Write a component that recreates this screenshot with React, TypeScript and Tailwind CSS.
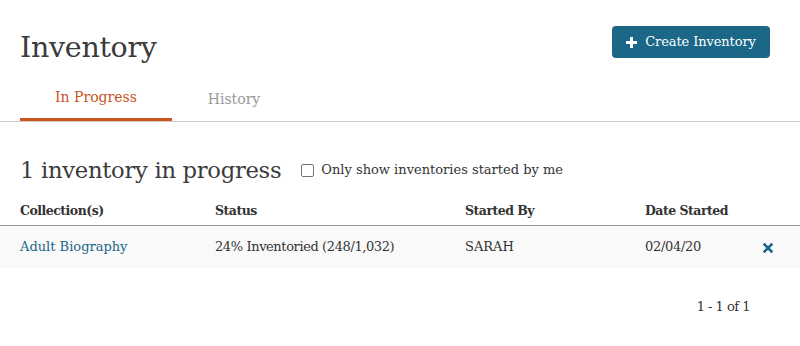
const slab = { fontFamily: '"DejaVu Serif", "Liberation Serif", serif' }

const rows = [
  {
    collection: 'Adult Biography',
    status: '24% Inventoried (248/1,032)',
    startedBy: 'SARAH',
    date: '02/04/20',
  },
]

export default function App() {
  return (
    <div className="w-[800px] h-[346px] bg-white text-[#333]" style={slab}>
      {/* Header */}
      <div className="flex h-[58px] items-start justify-between px-5 pt-[26px]">
        <h1 className="mt-[5px] text-[28.5px] leading-[34px] text-[#3b3b3b] tracking-[-0.3px]">Inventory</h1>
        <button className="mr-[10px] flex h-[32px] w-[158px] items-center justify-center gap-[8px] rounded-[4px] bg-[#1b6787] text-[13px] font-medium text-white">
          <svg width="11" height="11" viewBox="0 0 11 11" fill="white">
            <rect x="4" y="0" width="3" height="11" />
            <rect x="0" y="4" width="11" height="3" />
          </svg>
          <span className="tracking-[-0.1px]">Create Inventory</span>
        </button>
      </div>

      {/* Tabs */}
      <div className="mt-[17px] flex border-b border-[#cccccc] pl-5">
        <div className="-mb-px flex h-[46px] w-[152px] items-center justify-center border-b-[3px] border-[#c9541f] pt-[2px] text-[14px] text-[#c9541f]">
          In Progress
        </div>
        <div className="flex h-[46px] w-[124px] items-center justify-center pt-[2px] text-[14px] text-[#999]">
          History
        </div>
      </div>

      {/* Summary */}
      <div className="mt-[32px] flex items-center px-5">
        <h2 className="text-[22.7px] leading-[32px] text-[#3b3b3b] tracking-[-0.3px]">1 inventory in progress</h2>
        <label className="ml-[20px] flex items-center gap-[7px] text-[13px] text-[#333]">
          <span className="h-[13px] w-[13px] rounded-[2px] border border-[#767676] bg-white" />
          Only show inventories started by me
        </label>
      </div>

      {/* Table */}
      <div className="mt-[12px]">
        <div className="grid h-[28px] grid-cols-[195px_250px_180px_1fr] items-center border-b border-[#999] px-5 text-[12.5px] font-bold tracking-[-0.5px] text-[#333]">
          <div>Collection(s)</div>
          <div>Status</div>
          <div>Started By</div>
          <div>Date Started</div>
        </div>
        {rows.map((row) => (
          <div
            key={row.collection}
            className="grid h-[42px] grid-cols-[195px_250px_180px_1fr_auto] items-center bg-[#f9f9f9] pl-5 pr-[27px] text-[13px]"
          >
            <a className="text-[#1b6787]">{row.collection}</a>
            <div className="tracking-[-0.4px]">{row.status}</div>
            <div>{row.startedBy}</div>
            <div className="tracking-[-0.3px]">{row.date}</div>
            <svg width="10" height="10" viewBox="0 0 10 10" className="mt-[2px]">
              <path d="M1.5 1.5 L8.5 8.5 M8.5 1.5 L1.5 8.5" stroke="#1b6787" strokeWidth="2.6" strokeLinecap="square" />
            </svg>
          </div>
        ))}
      </div>

      {/* Pagination */}
      <div className="mt-[29px] flex justify-end pr-[50px] text-[13px] leading-[20px] tracking-[-0.5px]">1 - 1 of 1</div>
    </div>
  )
}
